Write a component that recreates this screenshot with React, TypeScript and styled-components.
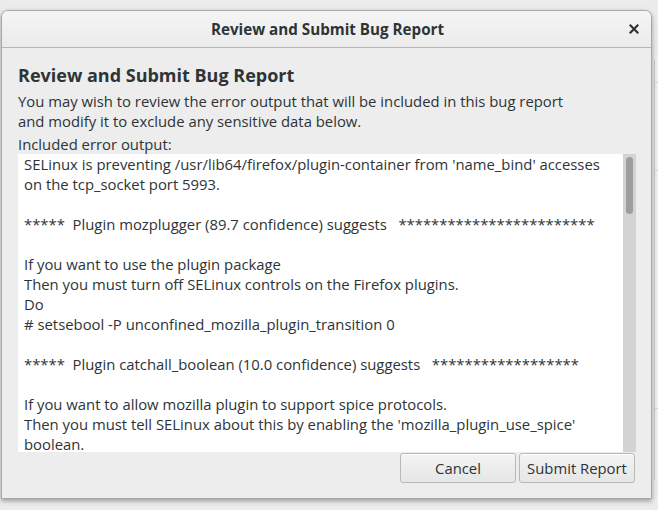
import React from "react";
import styled, { createGlobalStyle } from "styled-components";

const Global = createGlobalStyle`
  html, body { margin: 0; padding: 0; }
  body {
    width: 658px;
    height: 510px;
    overflow: hidden;
    background: #e9e9e9;
    font-family: "Open Sans", "DejaVu Sans", sans-serif;
    color: #2e3436;
  }
`;

const Desktop = styled.div`
  position: relative;
  width: 658px;
  height: 510px;
  background: #ececec;
  display: flex;
  align-items: flex-start;
  overflow: hidden;
`;

const BackWindow = styled.div`
  position: absolute;
  left: 654px;
  top: 60px;
  width: 4px;
  height: 420px;
  background: #efefef;
  border-left: 1px solid #c8c8c8;
`;

const BackLine = styled.div<{ $top: number }>`
  position: absolute;
  left: 0;
  right: 0;
  top: ${(p) => p.$top}px;
  border-top: 1px solid #d6d6d6;
`;

const Dialog = styled.div`
  position: relative;
  margin: 10px 0 0 1px;
  width: 651px;
  height: 489px;
  display: flex;
  flex-direction: column;
  background: #ededed;
  border: 1px solid #a8a8a8;
  border-radius: 7px 7px 0 0;
  box-shadow: 0 2px 5px rgba(0, 0, 0, 0.35);
  box-sizing: border-box;
  overflow: hidden;
`;

const HeaderBar = styled.div`
  height: 36px;
  flex: none;
  display: flex;
  align-items: center;
  justify-content: center;
  position: relative;
  background: linear-gradient(#f5f5f5, #ebebeb);
  border-bottom: 1px solid #b6b6b3;
`;

const HeaderTitle = styled.div`
  font-weight: 700;
  font-size: 15.2px;
  color: #2e3436;
  margin-left: 2px;
`;

const CloseButton = styled.div`
  position: absolute;
  right: 10px;
  top: 11px;
  width: 14px;
  height: 14px;
  display: flex;
  align-items: center;
  justify-content: center;
`;

const Body = styled.div`
  flex: 1;
  display: flex;
  flex-direction: column;
  padding: 15px 15px 0 16px;
`;

const Heading = styled.div`
  font-size: 18px;
  font-weight: 700;
  line-height: 25px;
  color: #2e3436;
  margin-bottom: 3px;
`;

const Para = styled.div`
  font-size: 14.85px;
  line-height: 20px;
  color: #2e3436;
`;

const Label = styled(Para)`
  margin-top: 3px;
`;

const TextArea = styled.div`
  height: 298px;
  display: flex;
  background: #fff;
`;

const TextContent = styled.div`
  flex: 1;
  padding: 0 0 0 6px;
  overflow: hidden;
  font-size: 14.85px;
  line-height: 20px;
  white-space: pre;
  color: #2e3436;
`;

const Trough = styled.div`
  width: 13px;
  flex: none;
  background: #d3d3d3;
  position: relative;
`;

const Thumb = styled.div`
  position: absolute;
  left: 3px;
  top: 3px;
  width: 7px;
  height: 57px;
  border-radius: 4px;
  background: #9d9d9d;
`;

const ButtonRow = styled.div`
  display: flex;
  justify-content: flex-end;
  gap: 3px;
  margin-top: 1px;
  padding-right: 1px;
`;

const Button = styled.div`
  width: 116px;
  height: 30px;
  box-sizing: border-box;
  border: 1px solid #b8b8b6;
  border-radius: 3px;
  background: linear-gradient(#f4f4f4, #e6e6e6);
  display: flex;
  align-items: center;
  justify-content: center;
  font-size: 14.85px;
  color: #2e3436;
  box-shadow: inset 0 1px #fff;
`;

const lines = [
  "SELinux is preventing /usr/lib64/firefox/plugin-container from 'name_bind' accesses",
  "on the tcp_socket port 5993.",
  "",
  "*****  Plugin mozplugger (89.7 confidence) suggests   ************************",
  "",
  "If you want to use the plugin package",
  "Then you must turn off SELinux controls on the Firefox plugins.",
  "Do",
  "# setsebool -P unconfined_mozilla_plugin_transition 0",
  "",
  "*****  Plugin catchall_boolean (10.0 confidence) suggests   ******************",
  "",
  "If you want to allow mozilla plugin to support spice protocols.",
  "Then you must tell SELinux about this by enabling the 'mozilla_plugin_use_spice'",
  "boolean.",
];

export default function App() {
  return (
    <>
      <Global />
      <Desktop>
        <BackWindow>
          <BackLine $top={22} />
          <BackLine $top={110} />
          <BackLine $top={348} />
        </BackWindow>
        <Dialog>
          <HeaderBar>
            <HeaderTitle>Review and Submit Bug Report</HeaderTitle>
            <CloseButton>
              <svg width="10" height="10" viewBox="0 0 10 10">
                <path d="M1.5 1.5 L8.5 8.5 M8.5 1.5 L1.5 8.5" stroke="#2e3436" strokeWidth="2.2" strokeLinecap="square" />
              </svg>
            </CloseButton>
          </HeaderBar>
          <Body>
            <Heading>Review and Submit Bug Report</Heading>
            <Para>You may wish to review the error output that will be included in this bug report</Para>
            <Para>and modify it to exclude any sensitive data below.</Para>
            <Label>Included error output:</Label>
            <TextArea>
              <TextContent>{lines.join("\n")}</TextContent>
              <Trough>
                <Thumb />
              </Trough>
            </TextArea>
            <ButtonRow>
              <Button>Cancel</Button>
              <Button>Submit Report</Button>
            </ButtonRow>
          </Body>
        </Dialog>
      </Desktop>
    </>
  );
}
